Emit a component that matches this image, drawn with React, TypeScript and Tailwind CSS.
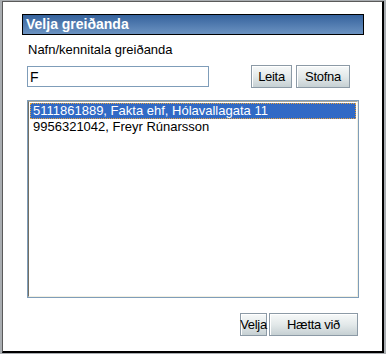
import { useState } from 'react';

const payers = [
  '5111861889, Fakta ehf, Hólavallagata 11',
  '9956321042, Freyr Rúnarsson',
];

function XpButton({ label, width }: { label: string; width: string }) {
  return (
    <button
      className={`${width} h-[23px] flex items-center justify-center whitespace-nowrap border border-[#8c9aa6] bg-gradient-to-b from-[#f7f9f9] via-[#e3e9ea] to-[#c6d0d3] text-[13px] tracking-[-0.3px] text-black shadow-[inset_1px_1px_0_#ffffff]`}
    >
      {label}
    </button>
  );
}

export default function App() {
  const [query, setQuery] = useState('F');
  const [selected, setSelected] = useState(0);

  return (
    <div
      className="w-[386px] h-[354px] bg-[#a9adb1] pl-[2px] pt-[1px]"
      style={{ fontFamily: '"Liberation Sans", Arial, sans-serif' }}
    >
      <div className="w-[382px] h-[352px] bg-white border-l border-t border-l-[#5a5a5a] border-t-[#5a5a5a] border-r-2 border-b-2 border-r-black border-b-black pl-[19px] pr-[18px] pt-[12px] flex flex-col">
        {/* Title */}
        <div className="h-[21px] border border-black bg-gradient-to-b from-[#36639d] to-[#6b92c1] pl-[3px] text-[14px] font-bold leading-[19px] text-white">
          Velja greiðanda
        </div>

        <div className="mt-[7px] ml-[6px] text-[13px] leading-[15px] text-black">
          Nafn/kennitala greiðanda
        </div>

        {/* Search row */}
        <div className="mt-[8px] flex items-start">
          <input
            value={query}
            onChange={(e) => setQuery(e.target.value)}
            className="ml-[5px] mt-[1px] w-[182px] h-[21px] border border-[#7f9db9] px-[2px] text-[14px] leading-[19px] text-black outline-none"
          />
          <div className="ml-[42px] flex gap-[4px]">
            <XpButton label="Leita" width="w-[41px]" />
            <XpButton label="Stofna" width="w-[54px]" />
          </div>
        </div>

        {/* Results list */}
        <div className="mt-[12px] ml-[5px] w-[332px] h-[198px] border border-[#7f9db9]">
          <div className="h-full border-l border-t border-l-[#716f64] border-t-[#aca899] border-r border-b border-r-[#f1efe2] border-b-[#f1efe2] pt-[1px] pl-[1px] pr-[1px]">
            {payers.map((p, i) => (
              <div
                key={p}
                onClick={() => setSelected(i)}
                className={
                  i === selected
                    ? 'h-[16px] border border-dotted border-[#e8a33a] bg-[#316ac5] pl-[2px] text-[13px] leading-[14px] text-white'
                    : 'h-[16px] border border-transparent pl-[2px] text-[13px] leading-[14px] text-black'
                }
              >
                {p}
              </div>
            ))}
          </div>
        </div>

        {/* Footer */}
        <div className="mt-[15px] pr-[6px] flex justify-end gap-[2px]">
          <XpButton label="Velja" width="w-[27px]" />
          <XpButton label="Hætta við" width="w-[89px]" />
        </div>
      </div>
    </div>
  );
}
